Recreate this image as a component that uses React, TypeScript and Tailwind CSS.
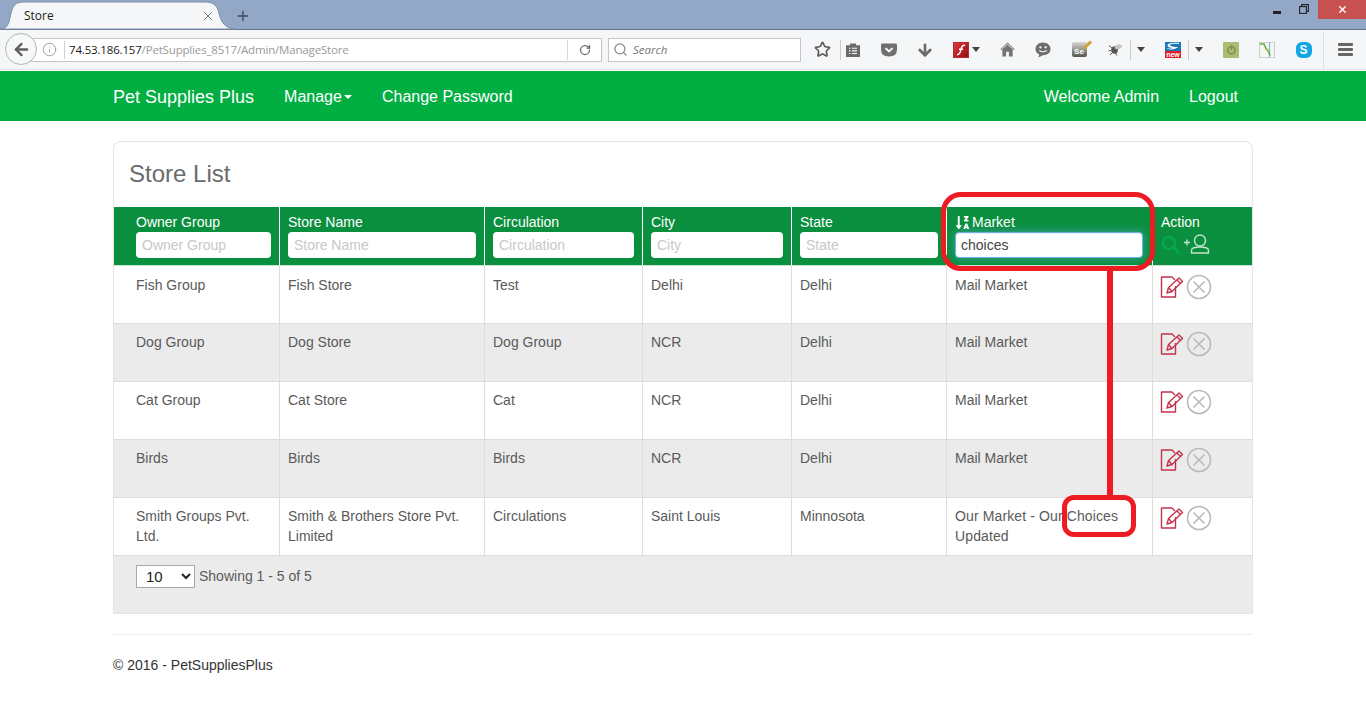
import React from "react";
import { ArrowLeft, Info, RotateCw, Search, X, Plus, Star, ArrowDown } from "lucide-react";
import { FaSortAlphaDownAlt } from "react-icons/fa";

const rows = [
  ["Fish Group", "Fish Store", "Test", "Delhi", "Delhi", "Mail Market"],
  ["Dog Group", "Dog Store", "Dog Group", "NCR", "Delhi", "Mail Market"],
  ["Cat Group", "Cat Store", "Cat", "NCR", "Delhi", "Mail Market"],
  ["Birds", "Birds", "Birds", "NCR", "Delhi", "Mail Market"],
  ["Smith Groups Pvt. Ltd.", "Smith & Brothers Store Pvt. Limited", "Circulations", "Saint Louis", "Minnosota", "Our Market - Our Choices Updated"],
];

const headers = [
  { label: "Owner Group", w: "w-[135px]" },
  { label: "Store Name", w: "w-[188px]" },
  { label: "Circulation", w: "w-[141px]" },
  { label: "City", w: "w-[132px]" },
  { label: "State", w: "w-[138px]" },
];

function Caret() {
  return <span className="w-0 h-0 border-l-[4px] border-r-[4px] border-t-[5px] border-l-transparent border-r-transparent border-t-[#444]" />;
}

function Divider() {
  return <span className="w-px h-[20px] bg-[#c9cbcd] shrink-0" />;
}

function Slot({ w, children }: { w: string; children?: React.ReactNode }) {
  return <div className={`${w} h-full flex items-center justify-center shrink-0`}>{children}</div>;
}

function EditIcon() {
  return (
    <svg width="24" height="24" viewBox="0 0 24 24" fill="none" stroke="#c4324e" strokeWidth="1.4">
      <path d="M15.5 11 V22 H1.5 V2 H12 L15 5" strokeLinejoin="round" />
      <path d="M7 18 L8.5 12.5 L19 3 L22.5 6.5 L12 16.5 Z" strokeLinejoin="round" />
      <path d="M17 5 L20.5 8.5 M8.5 12.5 L12 16.5" />
    </svg>
  );
}

function CancelIcon() {
  return (
    <svg width="26" height="26" viewBox="0 0 26 26" fill="none" stroke="#b9b9b9" strokeWidth="1.6">
      <circle cx="13" cy="13" r="11.5" />
      <path d="M7.5 7.5 L18.5 18.5 M18.5 7.5 L7.5 18.5" />
    </svg>
  );
}

function BrowserChrome() {
  return (
    <div className="font-['Open_Sans',sans-serif]">
      <div className="relative h-[30px] bg-[#93a8c6] border-b border-[#64788f] flex items-start justify-end">
        <svg className="absolute left-0 top-0" width="240" height="30" viewBox="0 0 240 30">
          <path d="M0 29 C8 29 9 23 11 13 C13 5 16 2 24 2 H205 C213 2 217 5 219 13 C221 23 226 29 236 29 Z" fill="#f5f6f7" stroke="#7c8ea8" strokeWidth="1" />
        </svg>
        <span className="absolute left-6 top-[7px] text-[12px] leading-[18px] text-[#222]">Store</span>
        <X className="absolute left-[201px] top-[9px] text-[#555]" size={14} strokeWidth={1.3} />
        <Plus className="absolute left-[235px] top-[8px] text-[#3f4a5c]" size={16} strokeWidth={2} />
        <div className="relative flex h-[19px] items-start">
          <span className="mt-[11px] mr-[18px] w-[8px] h-[3px] bg-[#222]" />
          <svg className="mt-[4px] mr-[9px]" width="10" height="10" viewBox="0 0 10 10" fill="none" stroke="#222" strokeWidth="1.1">
            <rect x="0.6" y="2.6" width="6.8" height="6.8" />
            <path d="M2.6 2.6 V0.6 H9.4 V7.4 H7.4" />
          </svg>
          <div className="w-[48px] h-[19px] bg-[#c75050] flex items-center justify-center">
            <X className="text-white" size={11} strokeWidth={3} />
          </div>
        </div>
      </div>
      <div className="relative h-[40px] bg-[#f5f6f7] border-b border-[#dfe1e3] flex items-center pl-[30px]">
        <div className="absolute left-[5px] top-[3px] w-[32px] h-[32px] rounded-full border border-[#b4b6b8] bg-[#f7f8f8] flex items-center justify-center">
          <ArrowLeft className="text-[#5e5e5e]" size={19} strokeWidth={3} />
        </div>
        <div className="h-[24px] w-[572px] bg-white border border-[#c3c5c7] flex items-center pl-[11px] shrink-0">
          <Info className="text-[#9a9a9a]" size={15} strokeWidth={1.5} />
          <span className="w-px h-[18px] bg-[#d0d0d0] ml-[7px]" />
          <span className="ml-[4px] text-[11.5px] text-[#9a9a9a] whitespace-nowrap tracking-[-0.17px]"><span className="text-[#1a1a1a]">74.53.186.157</span>/PetSupplies_8517/Admin/ManageStore</span>
          <span className="ml-auto w-px h-[20px] bg-[#d9d9d9]" />
          <Slot w="w-[33px]"><RotateCw className="text-[#666]" size={12} strokeWidth={2.5} /></Slot>
        </div>
        <div className="ml-[6px] h-[24px] w-[193px] bg-white border border-[#c3c5c7] flex items-center pl-[4px] shrink-0">
          <Search className="text-[#8a8a8a]" size={15} strokeWidth={2} />
          <span className="ml-[5px] text-[11.5px] italic text-[#777]">Search</span>
        </div>
        <div className="h-full flex items-center ml-[3px]">
          <Slot w="w-[36px]"><Star className="text-[#5b5b5b]" size={17} strokeWidth={2.4} /></Slot>
          <Divider />
          <Slot w="w-[24px]">
            <svg width="14" height="14" viewBox="0 0 14 16" preserveAspectRatio="none">
              <path d="M0 2.5 H4 V0.5 H10 V2.5 H14 V16 H0 Z" fill="#6a6a6a" />
              <path d="M3 6 H4.5 M6 6 H11 M3 9 H4.5 M6 9 H11 M3 12 H4.5 M6 12 H11" stroke="#f5f6f7" strokeWidth="1.2" />
            </svg>
          </Slot>
          <div className="w-[6px]" />
          <Slot w="w-[36px]">
            <svg width="16" height="14" viewBox="0 0 16 15" preserveAspectRatio="none">
              <path d="M1.5 0.5 H14.5 Q16 0.5 16 2 V7 Q16 14.5 8 14.5 Q0 14.5 0 7 V2 Q0 0.5 1.5 0.5 Z" fill="#6f6f6f" />
              <path d="M4.5 5.5 L8 9 L11.5 5.5" fill="none" stroke="#f5f6f7" strokeWidth="2.2" />
            </svg>
          </Slot>
          <Slot w="w-[36px]"><ArrowDown className="text-[#6a6a6a]" size={18} strokeWidth={3.6} /></Slot>
          <div className="w-[4px]" />
          <Slot w="w-[28px]">
            <div className="w-[16px] h-[16px] bg-[linear-gradient(135deg,#e0383e,#8f0f14)] border border-[#b52a2e] flex items-center justify-center">
              <svg width="10" height="12" viewBox="0 0 10 12" fill="none" stroke="#fff" strokeWidth="1.4">
                <path d="M9 1.2 C6 1 5.3 3 4.7 6 C4.3 9 3.5 10.6 1 10.8 M3 5.2 H7" />
              </svg>
            </div>
          </Slot>
          <span className="-ml-[3px] flex"><Caret /></span>
          <div className="w-[12px]" />
          <Slot w="w-[30px]">
            <svg width="15" height="15" viewBox="0 0 16 17" preserveAspectRatio="none">
              <path d="M8 0.5 L0 8.5 H2.5 V16.5 H6.5 V11 H9.5 V16.5 H13.5 V8.5 H16 Z" fill="#747474" />
              <path d="M2.5 7.5 L8 2.5 L13.5 7.5" fill="none" stroke="#f5f6f7" strokeWidth="1" />
            </svg>
          </Slot>
          <div className="w-[3px]" />
          <Slot w="w-[36px]">
            <svg width="16" height="16" viewBox="0 0 17 18" preserveAspectRatio="none">
              <path d="M8.5 0.5 C13.3 0.5 16.5 3.7 16.5 8 C16.5 12.5 13 15 8.5 15 L3.5 17.5 L4.5 14 C2 13 0.5 10.8 0.5 8 C0.5 3.7 3.7 0.5 8.5 0.5 Z" fill="#6d6d6d" />
              <circle cx="5.7" cy="6" r="1.3" fill="#f5f6f7" />
              <circle cx="11.3" cy="6" r="1.3" fill="#f5f6f7" />
              <path d="M4.5 9.5 Q8.5 12.5 12.5 9.5" fill="none" stroke="#f5f6f7" strokeWidth="1.3" />
            </svg>
          </Slot>
          <Slot w="w-[36px]">
            <div className="relative w-[15px] h-[15px] rounded-[2px] bg-[linear-gradient(180deg,#d9d9d2,#55554f)] flex items-end justify-center">
              <span className="font-['Liberation_Sans',sans-serif] text-[8px] leading-[10px] font-bold text-white">Se</span>
              <span className="absolute -right-[2px] -top-[2px] w-[3px] h-[10px] rotate-45 bg-[#c9a53c]" />
            </div>
          </Slot>
          <Slot w="w-[33px]">
            <svg width="15" height="13" viewBox="0 0 16 14" fill="none" className="ml-[3px]">
              <ellipse cx="7" cy="7.5" rx="3.6" ry="4" fill="#555" />
              <ellipse cx="11" cy="4" rx="4" ry="2.5" fill="#c4c4c4" transform="rotate(-15 11 4)" />
              <path d="M4 5 L1 3 M3.5 8 L0.5 8.5 M4.5 10.5 L2 13 M8 11 L9.5 13.5" stroke="#444" strokeWidth="1" />
            </svg>
          </Slot>
          <Divider />
          <Slot w="w-[20px]"><Caret /></Slot>
          <div className="w-[10px]" />
          <Slot w="w-[24px]">
            <div className="w-[16px] h-[16px] flex flex-col">
              <svg width="16" height="9" viewBox="0 0 16 9" className="block shrink-0">
                <rect width="16" height="9" fill="#1c77b8" />
                <path d="M2 7 C7 8 11 7 13 5 C9 5 5 4.5 5 3 C5 2 9 1.5 14 2 L14 0.8 C8 0.3 2.5 1 2.5 3.5 C2.5 5 5 5.8 8 6 C6 6.5 4 6.7 2 6.5 Z" fill="#fff" />
              </svg>
              <div className="h-[7px] bg-[#e31b23] text-white text-[7px] leading-[7px] font-bold text-center font-['Liberation_Sans',sans-serif]">new</div>
            </div>
          </Slot>
          <div className="w-[3px]" />
          <Divider />
          <Slot w="w-[20px]"><Caret /></Slot>
          <div className="w-[14px]" />
          <Slot w="w-[16px]">
            <div className="w-[16px] h-[16px] bg-[#a9bc6f] rounded-[1px] flex items-center justify-center">
              <svg width="9" height="11" viewBox="0 0 9 11" fill="none" stroke="#7c8c4c" strokeWidth="1.4">
                <circle cx="4.5" cy="6.2" r="3.6" />
                <path d="M4.5 1 V6" />
              </svg>
            </div>
          </Slot>
          <div className="w-[20px]" />
          <Slot w="w-[16px]">
            <svg width="16" height="16" viewBox="0 0 16 20" fill="none" preserveAspectRatio="none">
              <rect x="0.5" y="0.5" width="15" height="19" fill="#f3f6f1" stroke="#c6ccc8" />
              <path d="M10.5 0.5 V19.5" stroke="#86c6e0" strokeWidth="1.4" />
              <path d="M1 2.5 H5 L7 8 L9.5 12 L11 17" stroke="#6fae45" strokeWidth="1.6" />
              <path d="M6 8 L9 10" stroke="#d8a53a" strokeWidth="1.5" />
            </svg>
          </Slot>
          <div className="w-[20px]" />
          <Slot w="w-[17px]">
            <div className="w-[16px] h-[16px] rounded-[6px] bg-[#12a5e6] text-white text-[12px] leading-[16px] font-bold text-center font-['Liberation_Sans',sans-serif]">S</div>
          </Slot>
          <div className="w-[11px]" />
          <span className="w-px h-[36px] bg-[#dcdedf] shrink-0" />
          <Slot w="w-[43px]">
            <div className="flex flex-col gap-[2px]">
              <span className="w-[15px] h-[3px] rounded-[1px] bg-[#666]" />
              <span className="w-[15px] h-[3px] rounded-[1px] bg-[#666]" />
              <span className="w-[15px] h-[3px] rounded-[1px] bg-[#666]" />
            </div>
          </Slot>
        </div>
      </div>
    </div>
  );
}

function Annotations() {
  return (
    <>
      <div className="absolute left-[941px] top-[192px] w-[214px] h-[79px] border-[5px] border-[#ed1c24] rounded-[20px]" />
      <div className="absolute left-[1107px] top-[270px] w-[6px] h-[228px] bg-[#ed1c24]" />
      <div className="absolute left-[1062px] top-[495px] w-[74px] h-[42px] border-[5px] border-[#ed1c24] rounded-[12px]" />
    </>
  );
}

export default function App() {
  return (
    <div className="relative w-[1366px] h-[720px] overflow-hidden bg-white font-['Liberation_Sans',sans-serif] text-[14px] leading-[20px] text-[#5a5a5a]">
      <BrowserChrome />
      <nav className="h-[50px] bg-[#00ae42] mx-0 mt-[1px] text-white">
        <div className="w-[1140px] mx-auto h-full pt-[2px] flex items-center text-[16px]">
          <span className="text-[18px]">Pet Supplies Plus</span>
          <span className="ml-[30px] flex items-center gap-[2px]">Manage
            <span className="w-0 h-0 border-l-[4px] border-r-[4px] border-t-[4px] border-l-transparent border-r-transparent border-t-white" />
          </span>
          <span className="ml-[30px]">Change Password</span>
          <span className="ml-auto">Welcome Admin</span>
          <span className="ml-[30px] mr-[15px]">Logout</span>
        </div>
      </nav>
      <main className="w-[1140px] mx-auto pt-[20px]">
        <div className="border border-[#e3e3e3] rounded-t-[8px] overflow-hidden">
          <h2 className="h-[65px] pl-[15px] pt-[17px] text-[24px] leading-[30px] text-[#6b6b6b]">Store List</h2>
          <table className="w-[1138px] table-fixed border-separate border-spacing-0">
            <colgroup>
              <col className="w-[166px]" />
              <col className="w-[205px]" />
              <col className="w-[158px]" />
              <col className="w-[149px]" />
              <col className="w-[155px]" />
              <col className="w-[206px]" />
              <col className="w-[99px]" />
            </colgroup>
            <thead>
              <tr className="h-[59px] bg-[#0a8f3e] text-white">
                {headers.map((h, i) => (
                  <th key={h.label} className={`${i === 0 ? "pl-[22px]" : "pl-[8px]"} align-top pt-[5px] font-normal text-left border-r border-b border-r-white border-b-[#c9e6d3]`}>
                    <div>{h.label}</div>
                    <input readOnly placeholder={h.label} className={`${h.w} block h-[26px] rounded-[4px] bg-white px-[6px] text-[14px] text-[#555] placeholder:text-[#c8c8c8] outline-none`} />
                  </th>
                ))}
                <th className="pl-[8px] align-top pt-[5px] font-normal text-left border-r border-b border-r-white border-b-[#c9e6d3]">
                  <div className="flex items-center gap-[2px]"><FaSortAlphaDownAlt size={15} />Market</div>
                  <input readOnly value="choices" className="w-[188px] block h-[26px] rounded-[4px] bg-white px-[5px] text-[14px] text-[#444] outline-none border border-[#66afe9] shadow-[inset_0_1px_1px_rgba(0,0,0,0.075),0_0_8px_rgba(102,175,233,0.6)]" />
                </th>
                <th className="pl-[8px] align-top pt-[5px] font-normal text-left border-b border-b-[#c9e6d3]">
                  <div>Action</div>
                  <div className="flex items-start h-[26px]">
                    <svg width="20" height="20" viewBox="0 0 20 20" fill="none" stroke="#05a84e" strokeWidth="2.6" className="mt-[3px]">
                      <circle cx="8" cy="8" r="6" />
                      <path d="M12.5 12.5 L18.5 18.5" />
                    </svg>
                    <svg width="28" height="22" viewBox="0 0 28 22" fill="none" stroke="#c0e4cc" strokeWidth="1.4" className="ml-[2px] mt-[1px]">
                      <path d="M1 9.5 H7 M4 6.5 V12.5" />
                      <ellipse cx="17" cy="7.5" rx="5.5" ry="5.5" />
                      <path d="M8.5 20 V17.5 C8.5 15 12 14 17 14 C22 14 25.5 15 25.5 17.5 V20 Z" strokeLinejoin="round" />
                    </svg>
                  </div>
                </th>
              </tr>
            </thead>
            <tbody>
              {rows.map((row, i) => (
                <tr key={i} className={`h-[58px] ${i % 2 === 1 ? "bg-[#ebebeb]" : "bg-white"}`}>
                  {row.map((cell, j) => (
                    <td key={j} className={`${j === 0 ? "pl-[22px]" : "pl-[8px]"} pr-[8px] ${i === 0 ? "pt-[9px]" : "pt-[8px]"} ${i === 4 && j === 5 ? "tracking-[0.12px]" : ""} align-top border-r border-b border-[#dddddd]`}>{cell}</td>
                  ))}
                  <td className={`pl-[7px] ${i === 0 ? "pt-[8px]" : "pt-[7px]"} align-top border-b border-[#dddddd]`}>
                    <div className="flex items-center gap-[2px]"><EditIcon /><CancelIcon /></div>
                  </td>
                </tr>
              ))}
            </tbody>
          </table>
          <div className="h-[57px] bg-[#ebebeb] pl-[22px] pt-[9px] flex items-start gap-[4px]">
            <select defaultValue="10" className="w-[59px] h-[23px] bg-white border border-[#a9a9a9] text-[15px] text-[#222] pl-[5px]">
              <option>10</option>
              <option>25</option>
              <option>50</option>
            </select>
            <span className="mt-[1px]">Showing 1 - 5 of 5</span>
          </div>
        </div>
        <hr className="mt-[20px] border-t border-[#eeeeee]" />
        <p className="mt-[20px] text-[#333]">© 2016 - PetSuppliesPlus</p>
      </main>
      <Annotations />
    </div>
  );
}
